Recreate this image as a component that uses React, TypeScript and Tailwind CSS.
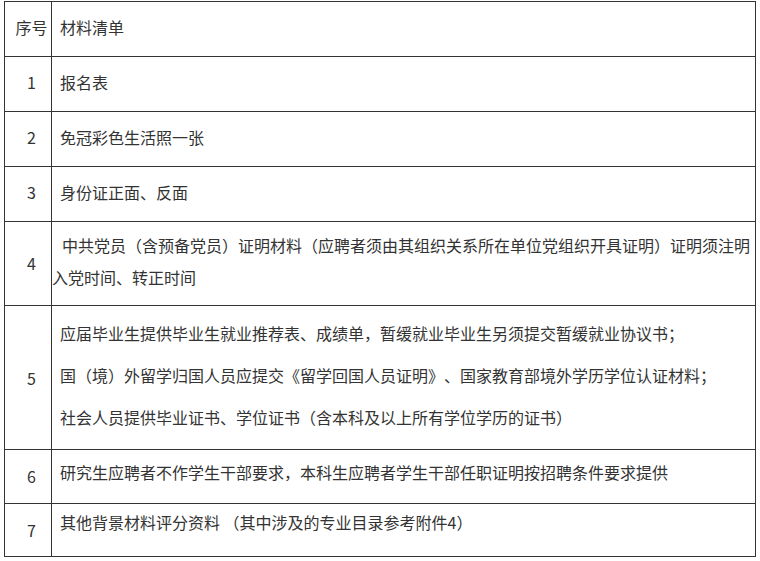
import React from 'react';

type Row = {
  no: string;
  h: string;
  pad: string;
  noPad: string;
  lines: string[];
  wrap?: boolean;
};

const rows: Row[] = [
  { no: '1', h: 'h-[55px]', pad: 'pb-[4px]', noPad: 'pb-[4px]', lines: ['报名表'] },
  { no: '2', h: 'h-[55px]', pad: 'pb-[4px]', noPad: 'pb-[4px]', lines: ['免冠彩色生活照一张'] },
  { no: '3', h: 'h-[55px]', pad: 'pb-[4px]', noPad: 'pb-[4px]', lines: ['身份证正面、反面'] },
  {
    no: '4',
    h: 'h-[84px]',
    pad: 'pb-[6px]',
    noPad: 'pb-[2px]',
    wrap: true,
    lines: ['中共党员（含预备党员）证明材料（应聘者须由其组织关系所在单位党组织开具证明）证明须注明入党时间、转正时间'],
  },
  {
    no: '5',
    h: 'h-[144px]',
    pad: 'pb-[6px]',
    noPad: 'pb-0',
    lines: [
      '应届毕业生提供毕业生就业推荐表、成绩单，暂缓就业毕业生另须提交暂缓就业协议书；',
      '国（境）外留学归国人员应提交《留学回国人员证明》、国家教育部境外学历学位认证材料；',
      '社会人员提供毕业证书、学位证书（含本科及以上所有学位学历的证书）',
    ],
  },
  { no: '6', h: 'h-[54px]', pad: 'pb-[10px]', noPad: 'pb-[2px]', lines: ['研究生应聘者不作学生干部要求，本科生应聘者学生干部任职证明按招聘条件要求提供'] },
  { no: '7', h: 'h-[52px]', pad: 'pb-[16px]', noPad: 'pb-0', lines: ['其他背景材料评分资料 （其中涉及的专业目录参考附件4）'] },
];

export default function App() {
  return (
    <div className="w-[760px] h-[561px] bg-white pl-[4px] pt-[1px] text-[16px] text-[#333] font-['Noto_Sans_CJK_SC',sans-serif] [text-spacing-trim:space-all]">
      <div className="w-[752px] border border-[#333] flex flex-col">
        {/* Header */}
        <div className="flex h-[55px] border-b border-[#333]">
          <div className="w-[47px] shrink-0 border-r border-[#333] flex items-center justify-center pl-[7px] pb-[4px]">
            序号
          </div>
          <div className="flex-1 flex items-center pl-[8px] pb-[4px]">材料清单</div>
        </div>

        {rows.map((row, i) => (
          <div
            key={row.no}
            className={`flex ${row.h} ${i < rows.length - 1 ? 'border-b border-[#333]' : ''}`}
          >
            <div className={`w-[47px] shrink-0 border-r border-[#333] flex items-center justify-center pl-[7px] ${row.noPad}`}>
              {row.no}
            </div>
            {row.wrap ? (
              <div className={`flex-1 flex items-center ${row.pad}`}>
                <p className="leading-[32px] indent-[10px]">{row.lines[0]}</p>
              </div>
            ) : (
              <div className={`flex-1 flex flex-col justify-center gap-[18px] pl-[8px] whitespace-nowrap ${row.pad}`}>
                {row.lines.map((line) => (
                  <p key={line} className="leading-[24px]">
                    {line}
                  </p>
                ))}
              </div>
            )}
          </div>
        ))}
      </div>
    </div>
  );
}
